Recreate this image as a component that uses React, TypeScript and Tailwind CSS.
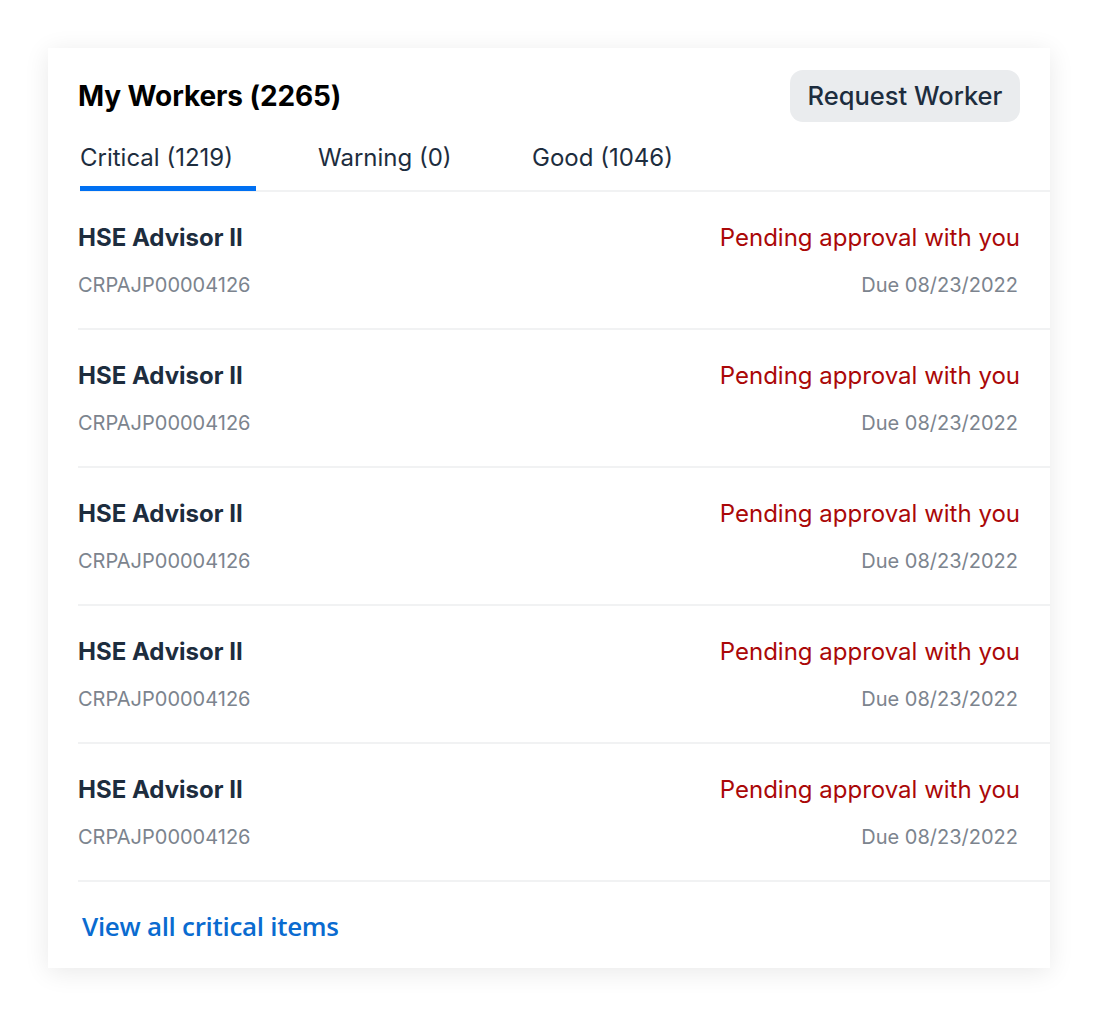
import { useState } from "react";

type Worker = {
  title: string;
  id: string;
  status: string;
  due: string;
};

const workers: Worker[] = Array.from({ length: 5 }, () => ({
  title: "HSE Advisor II",
  id: "CRPAJP00004126",
  status: "Pending approval with you",
  due: "Due 08/23/2022",
}));

const tabs = [
  { label: "Critical (1219)", width: "w-[176px]", pad: "" },
  { label: "Warning (0)", width: "w-[214px]", pad: "pl-[62px]" },
  { label: "Good (1046)", width: "w-[224px]", pad: "pl-[62px]" },
];

export default function App() {
  const [active, setActive] = useState(0);

  return (
    <div className="min-h-[1014px] bg-white pt-[48px] pl-[48px] font-['Inter',sans-serif]">
      <div className="w-[1002px] h-[920px] bg-white shadow-[0_4px_24px_rgba(0,0,0,0.09)] flex flex-col">
        {/* header */}
        <div className="flex items-center justify-between pl-[30px] pr-[30px] pt-[22px]">
          <h2 className="text-[28px] font-bold text-black tracking-[-0.1px]">My Workers (2265)</h2>
          <button className="h-[52px] w-[230px] rounded-[13px] bg-[#eaecee] text-[25.5px] font-medium text-[#1d2d3e]">
            Request Worker
          </button>
        </div>

        {/* tabs */}
        <div className="flex ml-[32px] mt-[16px] border-b-2 border-[#f1f2f3]">
          {tabs.map((t, i) => (
            <button
              key={t.label}
              onClick={() => setActive(i)}
              className={`${t.width} ${t.pad} flex flex-col text-left -mb-[1px]`}
            >
              <span className="block h-[40px] leading-[40px] text-[24px] text-[#1d2d3e] whitespace-nowrap">{t.label}</span>
              <span className={`block mt-[8px] h-[5px] ${i === active ? "bg-[#0070f2]" : "bg-transparent"}`} />
            </button>
          ))}
        </div>

        {/* rows */}
        <div className="flex flex-col">
          {workers.map((w, i) => (
            <div key={i} className="ml-[30px] border-b-2 border-[#f1f2f3] h-[138px] pr-[30px] flex flex-col pt-[30px]">
              <div className="flex items-center justify-between h-[32px]">
                <span className="text-[24px] font-bold text-[#1d2d3e]">{w.title}</span>
                <span className="text-[24px] text-[#aa0808]">{w.status}</span>
              </div>
              <div className="flex items-center justify-between h-[28px] mt-[17px]">
                <span className="text-[20px] text-[#7c848e]">{w.id}</span>
                <span className="text-[20px] text-[#7c848e] pr-[2px]">{w.due}</span>
              </div>
            </div>
          ))}
        </div>

        {/* footer */}
        <div className="pl-[34px] pt-[25px]">
          <a href="#" className="text-[26px] font-semibold text-[#0a6bd0] font-['Open_Sans',sans-serif] tracking-[-0.3px]">
            View all critical items
          </a>
        </div>
      </div>
    </div>
  );
}
